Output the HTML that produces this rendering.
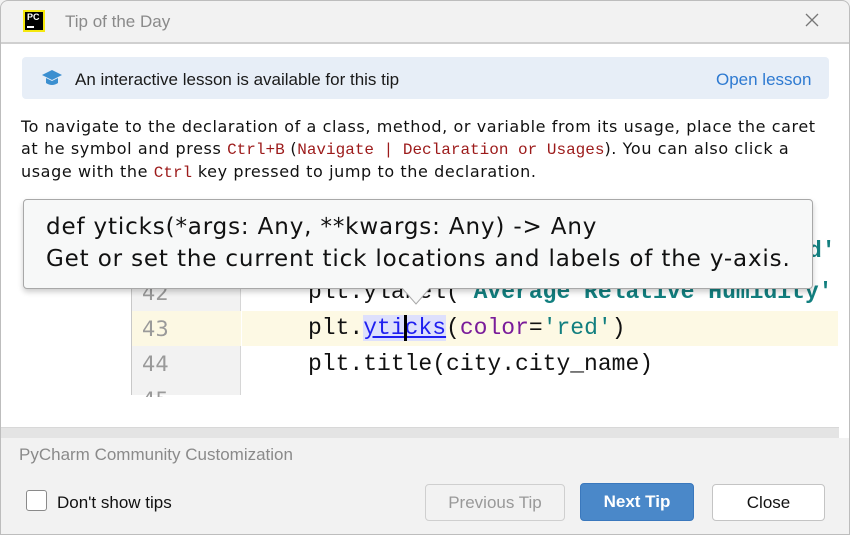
<!DOCTYPE html>
<html><head><style>
*{margin:0;padding:0;box-sizing:border-box}
body{width:850px;height:535px;overflow:hidden;background:#f2f2f2;font-family:"Liberation Sans",sans-serif;position:relative}
.abs{position:absolute}
.mono{font-family:"Liberation Mono",monospace}
</style></head><body>
<div class="abs" style="left:0;top:0;width:850px;height:535px;border:1px solid #bdbdbd;border-radius:8px 8px 0 0"></div>
<div class="abs" style="left:23px;top:10px;width:22px;height:22px;background:#f5e80e;"></div>
<div class="abs" style="left:25px;top:12px;width:18px;height:18px;background:#000;color:#fff;font-size:9px;font-weight:bold;line-height:10px;padding-left:2px">PC<div style="width:7px;height:2px;background:#fff;margin-top:4px"></div></div>
<div class="abs" style="left:65px;top:12px;font-size:17px;color:#8a8a8a">Tip of the Day</div>
<svg class="abs" style="left:804px;top:12px" width="16" height="16"><path d="M2 2L14 14M14 2L2 14" stroke="#777" stroke-width="1.3"/></svg>
<div class="abs" style="left:1px;top:42px;width:848px;height:2px;background:#d0d0d0"></div>
<div class="abs" style="left:1px;top:44px;width:848px;height:394px;background:#fff"></div>
<div class="abs" style="left:22px;top:57px;width:807px;height:42px;background:#e7eef7;border-radius:4px"></div>
<svg class="abs" style="left:41px;top:69px" width="22" height="20"><path d="M1 6L11 1L21 6L11 11Z" fill="#3b8fd0"/><path d="M5 9V14Q11 18 17 14V9L11 12Z" fill="#3b8fd0"/></svg>
<div class="abs" style="left:75px;top:70px;font-size:17px;color:#1a1a1a">An interactive lesson is available for this tip</div>
<div class="abs" style="left:716px;top:70px;font-size:17px;color:#2e7ad1">Open lesson</div>
<div class="abs" style="left:21px;top:116px;font-family:'DejaVu Sans',sans-serif;font-size:16px;letter-spacing:0.6px;line-height:22px;color:#111;width:830px;white-space:nowrap">To navigate to the declaration of a class, method, or variable from its usage, place the caret<br>at he symbol and press <span class="mono" style="color:#9c1a1a;font-size:16px;letter-spacing:0">Ctrl+B</span> (<span class="mono" style="color:#9c1a1a;font-size:16px;letter-spacing:0">Navigate | Declaration or Usages</span>). You can also click a<br>usage with the <span class="mono" style="color:#9c1a1a;font-size:16px;letter-spacing:0">Ctrl</span> key pressed to jump to the declaration.</div>
<div class="abs" style="left:131px;top:215px;width:110px;height:180px;background:#f2f2f2;border-left:1px solid #c8c8c8;border-right:1px solid #d6d6d6"></div>
<div class="abs" style="left:242px;top:311px;width:596px;height:35px;background:#fdf9e4"></div>
<div class="abs" style="left:132px;top:311px;width:109px;height:35px;background:#fcf8e3"></div>
<div class="abs" style="left:142px;top:276px;font-family:'DejaVu Sans',sans-serif;font-size:21px;color:#9a9a9a;line-height:35.5px">42<br>43<br>44<br><span style="display:inline-block;height:14px;overflow:hidden;vertical-align:top">45</span></div>
<div class="abs mono" style="left:308px;top:274px;font-size:23px;line-height:36px;color:#111;white-space:pre">plt.ylabel(<b style="color:#127f7f">'Average Relative Humidity'</b>
plt.<span style="background:#dee0fc;color:#1f1ff0;text-decoration:underline">yticks</span>(<span style="color:#7a1c9a">color</span>=<b style="color:#127f7f;font-weight:normal">'red'</b>)
plt.title(city.city_name)</div>
<div class="abs" style="left:404px;top:315px;width:3px;height:26px;background:#000"></div>
<div class="abs mono" style="left:808px;top:238px;font-size:23px;color:#127f7f;font-weight:bold">d'</div>
<div class="abs" style="left:23px;top:199px;width:790px;height:90px;background:#f7f8f8;border:1px solid #a8a8a8;border-radius:4px;box-shadow:0 3px 6px rgba(0,0,0,.2)"></div>
<svg class="abs" style="left:402px;top:287px" width="28" height="20"><path d="M0 1L14 17L28 1" fill="#f7f8f8" stroke="#a8a8a8"/><rect x="0" y="-2" width="28" height="3" fill="#f7f8f8"/></svg>
<div class="abs" style="left:46px;top:211px;font-size:23px;letter-spacing:0.85px;line-height:32px;color:#111;font-family:'DejaVu Sans',sans-serif;white-space:nowrap">def yticks(*args: Any, **kwargs: Any) -&gt; Any<br>Get or set the current tick locations and labels of the y-axis.</div>
<div class="abs" style="left:1px;top:427px;width:838px;height:11px;background:#e4e4e4;border-top:1px solid #d8d8d8"></div>
<div class="abs" style="left:19px;top:445px;font-size:17px;color:#8a8a8a">PyCharm Community Customization</div>
<div class="abs" style="left:26px;top:490px;width:21px;height:21px;border:1px solid #8a8a8a;border-radius:3px;background:#fff"></div>
<div class="abs" style="left:57px;top:493px;font-size:17px;color:#111">Don't show tips</div>
<div class="abs" style="left:425px;top:484px;width:140px;height:37px;border:1px solid #cfcfcf;border-radius:4px;background:#f2f2f2;color:#999;font-size:17px;text-align:center;line-height:35px">Previous Tip</div>
<div class="abs" style="left:580px;top:483px;width:114px;height:38px;border:1px solid #3a78bd;border-radius:4px;background:#4a88c9;color:#fff;font-size:17px;font-weight:bold;text-align:center;line-height:36px">Next Tip</div>
<div class="abs" style="left:712px;top:484px;width:113px;height:37px;border:1px solid #c4c4c4;border-radius:4px;background:#fff;color:#111;font-size:17px;text-align:center;line-height:35px">Close</div>
</body></html>
